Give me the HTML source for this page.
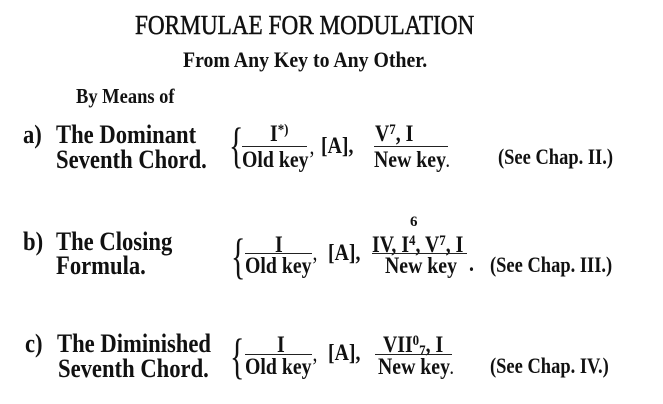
<!DOCTYPE html>
<html><head><meta charset="utf-8"><style>
body{margin:0;width:663px;height:404px;background:#fff;position:relative;overflow:hidden;font-family:"Liberation Serif",serif;color:#111}
.t{position:absolute;white-space:nowrap;line-height:1;transform-origin:0 0;font-weight:bold}
.h{font-size:26px;transform:scaleX(.87)}
.f{font-size:23px;transform:scaleX(.86)}
.s{font-size:15px;font-weight:bold;position:relative}
.ln{position:absolute;height:1.3px;background:#222}
.br{position:absolute;font-weight:normal;line-height:1;transform-origin:0 0}
</style></head><body>
<div class="t" style="left:135px;top:12px;font-size:27px;font-weight:normal;transform:scaleX(.86);-webkit-text-stroke:.5px #111">FORMULAE FOR MODULATION</div>
<div class="t" style="left:183px;top:49px;font-size:22px;transform:scaleX(.9)">From Any Key to Any Other.</div>
<div class="t" style="left:76px;top:86px;font-size:21px;transform:scaleX(.88)">By Means of</div>

<!-- a -->
<div class="t h" style="left:23px;top:122px">a)</div>
<div class="t h" style="left:56px;top:122px">The Dominant</div>
<div class="t h" style="left:56px;top:147px">Seventh Chord.</div>
<div class="br" style="left:229px;top:120px;font-size:50px;transform:scaleX(.6)">{</div>
<div class="t f" style="left:270px;top:122px">I<span class="s" style="top:-7px">*)</span></div>
<div class="ln" style="left:242px;top:146px;width:65px"></div>
<div class="t f" style="left:242px;top:148px">Old key<span style="font-weight:normal">’</span></div>
<div class="t f" style="left:321px;top:134px">[A],</div>
<div class="t f" style="left:375px;top:122px">V<span class="s" style="top:-7px">7</span>, I</div>
<div class="ln" style="left:374px;top:146px;width:74px"></div>
<div class="t f" style="left:374px;top:148px">New key<span style="font-size:16px">.</span></div>
<div class="t" style="left:498px;top:146px;font-size:22px;transform:scaleX(.84)">(See Chap. II.)</div>

<!-- b -->
<div class="t h" style="left:23px;top:229px">b)</div>
<div class="t h" style="left:56px;top:229px">The Closing</div>
<div class="t h" style="left:56px;top:253px">Formula.</div>
<div class="br" style="left:231px;top:231px;font-size:50px;transform:scaleX(.6)">{</div>
<div class="t f" style="left:275px;top:233px">I</div>
<div class="ln" style="left:245px;top:253px;width:67px"></div>
<div class="t f" style="left:245px;top:254px">Old key<span style="font-weight:normal">’</span></div>
<div class="t f" style="left:328px;top:241px">[A],</div>
<div class="t" style="left:410px;top:215px;font-size:15px">6</div>
<div class="t f" style="left:372px;top:233px">IV, I<span class="s" style="top:-7px">4</span>, V<span class="s" style="top:-7px">7</span>, I</div>
<div class="ln" style="left:372px;top:253px;width:95px"></div>
<div class="t f" style="left:385px;top:254px">New key</div>
<div class="t f" style="left:469px;top:252px">.</div>
<div class="t" style="left:490px;top:254px;font-size:22px;transform:scaleX(.84)">(See Chap. III.)</div>

<!-- c -->
<div class="t h" style="left:25px;top:331px">c)</div>
<div class="t h" style="left:57px;top:331px">The Diminished</div>
<div class="t h" style="left:58px;top:356px">Seventh Chord.</div>
<div class="br" style="left:230px;top:331px;font-size:50px;transform:scaleX(.6)">{</div>
<div class="t f" style="left:277px;top:333px">I</div>
<div class="ln" style="left:245px;top:354px;width:67px"></div>
<div class="t f" style="left:245px;top:355px">Old key<span style="font-weight:normal">’</span></div>
<div class="t f" style="left:328px;top:341px">[A],</div>
<div class="t f" style="left:383px;top:333px">VII<span class="s" style="top:-7px">0</span><span class="s" style="top:3px">7</span>, I</div>
<div class="ln" style="left:375px;top:354px;width:77px"></div>
<div class="t f" style="left:378px;top:355px">New key<span style="font-size:16px">.</span></div>
<div class="t" style="left:490px;top:355px;font-size:22px;transform:scaleX(.84)">(See Chap. IV.)</div>
</body></html>
